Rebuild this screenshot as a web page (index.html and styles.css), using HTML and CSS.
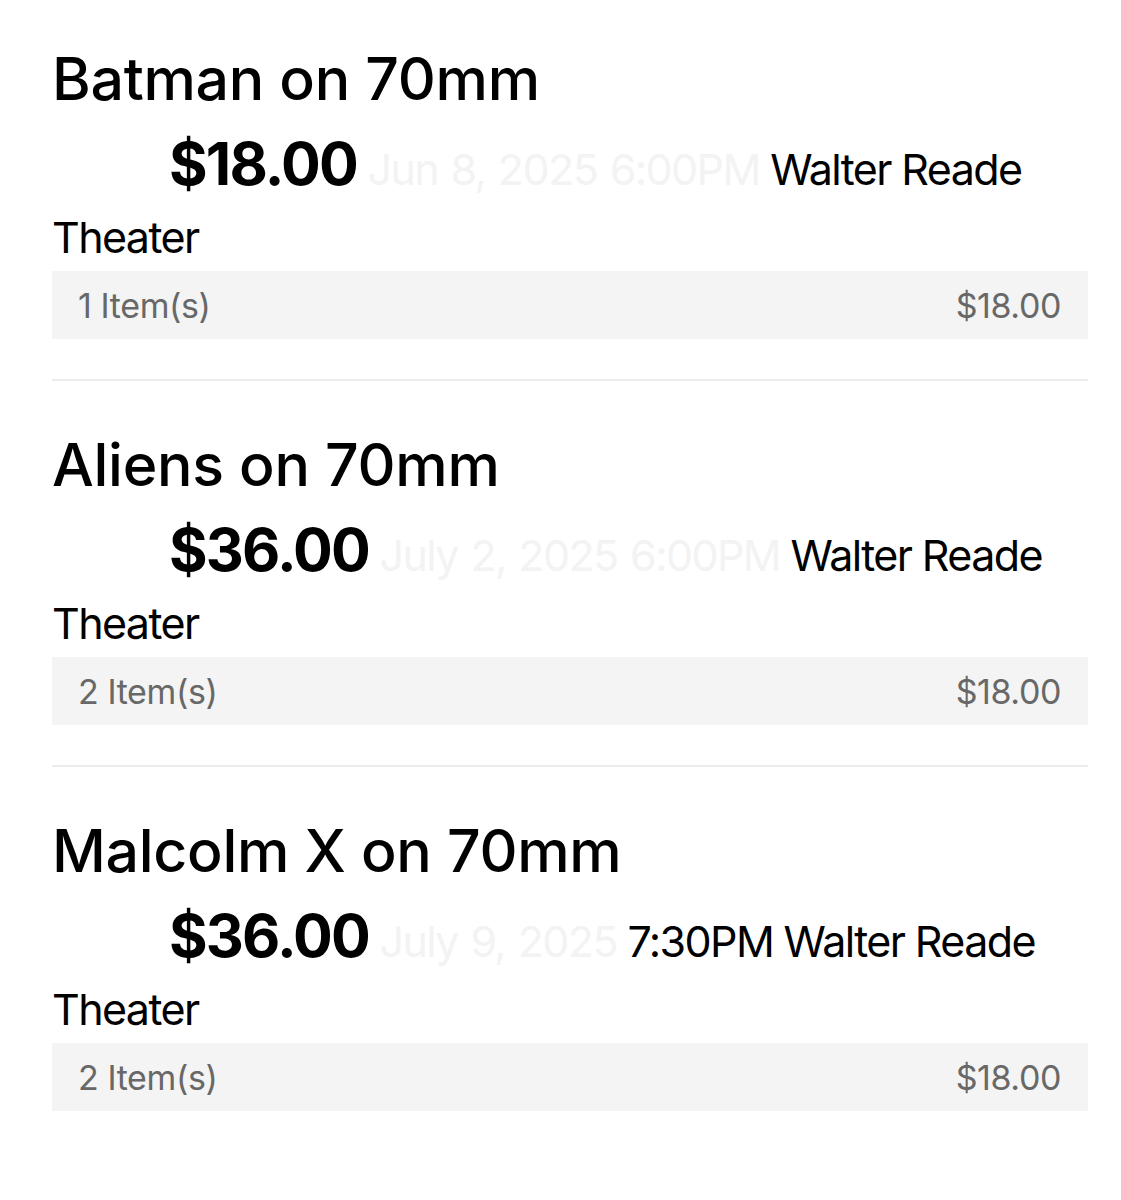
FILE: index.html
```html
<!DOCTYPE html>
<html lang="en">
<head>
    <meta charset="UTF-8">
    <meta name="viewport" content="width=device-width, initial-scale=1.0">
    <title>Orders</title>
    <link rel="stylesheet" href="styles.css">
</head>
<body>
    <div class="orders">
        <div class="order">
            <h2 class="order-title">Batman on 70mm</h2>
            <p class="order-info">
                <span class="price">$18.00</span>
                <span class="faded">Jun 8, 2025 6:00PM</span>
                Walter Reade Theater
            </p>
            <div class="summary">
                <span>1 Item(s)</span>
                <span>$18.00</span>
            </div>
        </div>
        <div class="order">
            <h2 class="order-title">Aliens on 70mm</h2>
            <p class="order-info">
                <span class="price">$36.00</span>
                <span class="faded">July 2, 2025 6:00PM</span>
                Walter Reade Theater
            </p>
            <div class="summary">
                <span>2 Item(s)</span>
                <span>$18.00</span>
            </div>
        </div>
        <div class="order">
            <h2 class="order-title">Malcolm X on 70mm</h2>
            <p class="order-info">
                <span class="price">$36.00</span>
                <span class="faded">July 9, 2025</span>
                7:30PM Walter Reade Theater
            </p>
            <div class="summary">
                <span>2 Item(s)</span>
                <span>$18.00</span>
            </div>
        </div>
    </div>
</body>
</html>
```

FILE: styles.css
```css
body {
    margin: 0;
    background-color: white;
    font-family: Inter, "Noto Sans", sans-serif;
    color: #000;
}

.orders {
    padding: 0 33px 0 52px;
}

.order {
    padding-top: 44px;
    padding-bottom: 40px;
    border-bottom: 2px solid #ececec;
}

.order + .order {
    padding-top: 49px;
}

.order:last-child {
    border-bottom: none;
}

.order-title {
    margin: 0;
    font-size: 59px;
    font-weight: 500;
    line-height: 70px;
    letter-spacing: -0.3px;
}

.order-info {
    margin: 16px 0 0;
    font-size: 43px;
    line-height: 68px;
    letter-spacing: -1.6px;
    text-indent: 117px;
}

.price {
    font-size: 59px;
    font-weight: 700;
    letter-spacing: -1.8px;
}

.faded {
    color: #f3f3f3;
    word-spacing: 2px;
}

.summary {
    display: flex;
    justify-content: space-between;
    align-items: center;
    height: 68px;
    padding: 0 27px 0 26px;
    background: #f4f4f4;
    color: #686868;
    font-size: 34px;
    letter-spacing: -0.4px;
}
```
